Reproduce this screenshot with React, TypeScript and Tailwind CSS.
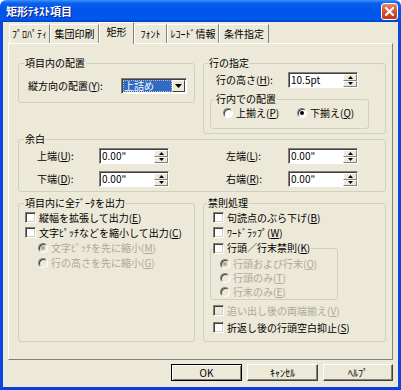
import React from 'react';

function M({ t, k, colon }: { t: string; k: string; colon?: boolean }) {
  return (
    <span className="whitespace-nowrap">
      {t}(<span className="underline underline-offset-[1px]">{k}</span>){colon ? ':' : ''}
    </span>
  );
}

function Check({ disabled }: { disabled?: boolean }) {
  return (
    <span
      className={`block w-[11px] h-[11px] shrink-0 border border-t-[#808080] border-l-[#808080] border-b-white border-r-white shadow-[inset_1px_1px_0_#404040,inset_-1px_-1px_0_#D4D0C8] ${
        disabled ? 'bg-[#ECE9D8]' : 'bg-white'
      }`}
    />
  );
}

function Radio({ checked, disabled }: { checked?: boolean; disabled?: boolean }) {
  return (
    <span
      className={`flex items-center justify-center w-[10px] h-[10px] shrink-0 rounded-full border border-t-[#808080] border-l-[#808080] border-b-white border-r-white shadow-[inset_1px_1px_0_#404040] ${
        disabled ? 'bg-[#ECE9D8]' : 'bg-white'
      }`}
    >
      {checked && (
        <span className={`w-[4px] h-[4px] rounded-full ${disabled ? 'bg-[#ACA899]' : 'bg-black'}`} />
      )}
    </span>
  );
}

function SpinBtn({ up }: { up?: boolean }) {
  return (
    <span className="flex items-center justify-center h-[7px] bg-[#ECE9D8] border border-t-white border-l-white border-b-[#808080] border-r-[#808080]">
      <svg width="5" height="3" viewBox="0 0 5 3">
        {up ? <path d="M2.5 0L5 3H0z" fill="#000" /> : <path d="M0 0h5L2.5 3z" fill="#000" />}
      </svg>
    </span>
  );
}

function SpinField({ value }: { value: string }) {
  return (
    <div className="flex w-[70px] h-[16px] border border-t-[#808080] border-l-[#808080] border-b-white border-r-white shadow-[inset_1px_1px_0_#404040] bg-white">
      <span className="flex-1 pl-[2px] pt-[1px] text-[10px] leading-[12px]">{value}</span>
      <span className="flex flex-col w-[14px] pt-[1px]">
        <SpinBtn up />
        <SpinBtn />
      </span>
    </div>
  );
}

function Legend({ children, ml = 'ml-[4px]' }: { children: React.ReactNode; ml?: string }) {
  return <legend className={`${ml} px-[1px] text-[10px] leading-[10px]`}>{children}</legend>;
}

const box = 'border border-[#D0D0BF] rounded-[3px] p-0 m-0 min-w-0';

function Tab({ label, w, active }: { label: string; w: string; active?: boolean }) {
  if (active) {
    return (
      <div
        className={`${w} h-[22px] mb-[-1px] relative z-10 flex justify-center pt-[3px] bg-[#ECE9D8] border-t border-l border-r border-t-white border-l-white border-r-[#808080]`}
      >
        {label}
      </div>
    );
  }
  return (
    <div
      className={`${w} h-[19px] flex justify-center pt-[3px] border-t border-l border-r border-t-white border-l-white border-r-[#808080]`}
    >
      {label}
    </div>
  );
}

export default function App() {
  return (
    <div className="w-[401px] h-[390px] flex flex-col font-['Noto_Sans_CJK_JP',sans-serif] text-[10px] leading-[12px] text-black">
      {/* title bar */}
      <div className="h-[22px] flex items-center justify-between rounded-t-[6px] bg-[linear-gradient(to_bottom,#3D95FF_0%,#0A5FEC_14%,#0055EA_50%,#0058EE_86%,#0040C4_100%)] pl-[6px] pr-[3px]">
        <span className="text-white font-bold text-[11px] leading-[14px] [text-shadow:1px_1px_0_#0A1883]">
          矩形ﾃｷｽﾄ項目
        </span>
        <span className="flex items-center justify-center w-[17px] h-[17px] rounded-[3px] border border-white bg-[linear-gradient(to_bottom,#E8896D,#D9532F_50%,#C13A18)]">
          <svg width="9" height="9" viewBox="0 0 9 9">
            <path d="M1 1L8 8M8 1L1 8" stroke="#fff" strokeWidth="2" strokeLinecap="square" />
          </svg>
        </span>
      </div>

      <div className="flex-1 flex flex-col bg-[#ECE9D8] border-x-[3px] border-b-[3px] border-x-[#0A46E0] border-b-[#0A3FD6]">
        {/* tabs */}
        <div className="h-[21px] flex items-end ml-[6px]">
          <Tab label="ﾌﾟﾛﾊﾟﾃｨ" w="w-[41px]" />
          <Tab label="集団印刷" w="w-[49px]" />
          <Tab label="矩形" w="w-[35px]" active />
          <Tab label="ﾌｫﾝﾄ" w="w-[33px]" />
          <Tab label="ﾚｺｰﾄﾞ情報" w="w-[52px]" />
          <Tab label="条件指定" w="w-[50px]" />
        </div>

        {/* panel */}
        <div className="ml-[5px] w-[385px] h-[317px] border border-t-white border-l-white border-r-[#808080] border-b-[#808080] pl-[9px] pt-[14px] flex flex-col">
          <div className="flex items-start gap-[8px]">
            <fieldset className={`${box} w-[177px] h-[45px]`}>
              <Legend ml="ml-[5px]">項目内の配置</Legend>
              <div className="flex items-center h-[16px] mt-[10px] pl-[9px]">
                <span className="w-[93px]">
                  <M t="縦方向の配置" k="Y" colon />
                </span>
                <div className="flex w-[66px] h-[16px] border border-t-[#808080] border-l-[#808080] border-b-white border-r-white shadow-[inset_1px_1px_0_#404040] bg-white p-[1px]">
                  <span className="flex-1 bg-[#316AC5] text-white pl-[1px] leading-[12px] outline-1 outline-dotted outline-[#C0C0C0] -outline-offset-1">
                    上詰め
                  </span>
                  <span className="flex items-center justify-center w-[13px] bg-[#ECE9D8] border border-t-white border-l-white border-b-[#404040] border-r-[#404040]">
                    <svg width="7" height="4" viewBox="0 0 7 4">
                      <path d="M0 0h7L3.5 4z" fill="#000" />
                    </svg>
                  </span>
                </div>
              </div>
            </fieldset>

            <fieldset className={`${box} w-[183px] h-[76px]`}>
              <Legend>行の指定</Legend>
              <div className="flex items-center h-[16px] mt-[4px] pl-[12px]">
                <span className="w-[72px]">
                  <M t="行の高さ" k="H" colon />
                </span>
                <SpinField value="10.5pt" />
              </div>
              <fieldset className={`${box} w-[159px] h-[35px] ml-[6px] mt-[6px]`}>
                <Legend ml="ml-[4px]">行内での配置</Legend>
                <div className="flex items-center h-[14px] mt-[2px] pl-[12px]">
                  <span className="flex items-center gap-[3px] w-[74px]">
                    <Radio />
                    <M t="上揃え" k="P" />
                  </span>
                  <span className="flex items-center gap-[3px]">
                    <Radio checked />
                    <M t="下揃え" k="Q" />
                  </span>
                </div>
              </fieldset>
            </fieldset>
          </div>

          <fieldset className={`${box} w-[368px] h-[58px]`}>
            <Legend ml="ml-[5px]">余白</Legend>
            <div className="flex flex-col gap-[7px] mt-[4px] pl-[18px]">
              <div className="flex items-center h-[16px]">
                <span className="w-[62px]">
                  <M t="上端" k="U" colon />
                </span>
                <SpinField value={'0.00"'} />
                <span className="w-[62px] ml-[57px]">
                  <M t="左端" k="L" colon />
                </span>
                <SpinField value={'0.00"'} />
              </div>
              <div className="flex items-center h-[16px]">
                <span className="w-[62px]">
                  <M t="下端" k="D" colon />
                </span>
                <SpinField value={'0.00"'} />
                <span className="w-[62px] ml-[57px]">
                  <M t="右端" k="R" colon />
                </span>
                <SpinField value={'0.00"'} />
              </div>
            </div>
          </fieldset>

          <div className="flex items-start gap-[8px] mt-[6px]">
            <fieldset className={`${box} w-[177px] h-[144px]`}>
              <Legend ml="ml-[5px]">項目内に全ﾃﾞｰﾀを出力</Legend>
              <div className="flex flex-col pt-[2px]">
                <div className="flex items-center gap-[3px] h-[15px] pl-[6px]">
                  <Check />
                  <M t="縦幅を拡張して出力" k="E" />
                </div>
                <div className="flex items-center gap-[3px] h-[15px] pl-[6px]">
                  <Check />
                  <M t="文字ﾋﾟｯﾁなどを縮小して出力" k="C" />
                </div>
                <div className="flex items-center gap-[3px] h-[15px] pl-[19px] text-[#ACA899]">
                  <Radio checked disabled />
                  <M t="文字ﾋﾟｯﾁを先に縮小" k="M" />
                </div>
                <div className="flex items-center gap-[3px] h-[15px] pl-[19px] text-[#ACA899]">
                  <Radio disabled />
                  <M t="行の高さを先に縮小" k="G" />
                </div>
              </div>
            </fieldset>

            <fieldset className={`${box} w-[183px] h-[144px]`}>
              <Legend ml="ml-[3px]">禁則処理</Legend>
              <div className="flex flex-col pt-[2px]">
                <div className="flex items-center gap-[3px] h-[15px] pl-[9px]">
                  <Check />
                  <M t="句読点のぶら下げ" k="B" />
                </div>
                <div className="flex items-center gap-[3px] h-[15px] pl-[9px]">
                  <Check />
                  <M t="ﾜｰﾄﾞﾗｯﾌﾟ" k="W" />
                </div>
                <fieldset className={`${box} w-[128px] h-[58px] ml-[6px] mt-[2px]`}>
                  <legend className="ml-[1px] px-[1px] flex items-center gap-[3px] h-[12px]">
                    <Check />
                    <M t="行頭／行末禁則" k="K" />
                  </legend>
                  <div className="flex flex-col pt-[3px] pl-[9px] text-[#ACA899]">
                    <div className="flex items-center gap-[3px] h-[14px]">
                      <Radio checked disabled />
                      <M t="行頭および行末" k="Q" />
                    </div>
                    <div className="flex items-center gap-[3px] h-[14px]">
                      <Radio disabled />
                      <M t="行頭のみ" k="T" />
                    </div>
                    <div className="flex items-center gap-[3px] h-[14px]">
                      <Radio disabled />
                      <M t="行末のみ" k="E" />
                    </div>
                  </div>
                </fieldset>
                <div className="flex items-center gap-[3px] h-[15px] pl-[9px] mt-[3px] text-[#ACA899]">
                  <Check disabled />
                  <M t="追い出し後の両端揃え" k="V" />
                </div>
                <div className="flex items-center gap-[3px] h-[15px] pl-[9px] mt-[2px]">
                  <Check />
                  <M t="折返し後の行頭空白抑止" k="S" />
                </div>
              </div>
            </fieldset>
          </div>
        </div>

        {/* buttons */}
        <div className="flex justify-end gap-[5px] mt-[4px] mr-[5px]">
          <button className="w-[71px] h-[17px] border border-black shadow-[inset_1px_1px_0_#fff,inset_-1px_-1px_0_#808080] bg-[#ECE9D8] leading-[12px]">
            OK
          </button>
          <button className="w-[71px] h-[17px] border border-t-white border-l-white border-b-[#404040] border-r-[#404040] shadow-[inset_-1px_-1px_0_#808080] bg-[#ECE9D8] leading-[12px]">
            ｷｬﾝｾﾙ
          </button>
          <button className="w-[70px] h-[17px] border border-t-white border-l-white border-b-[#404040] border-r-[#404040] shadow-[inset_-1px_-1px_0_#808080] bg-[#ECE9D8] leading-[12px]">
            ﾍﾙﾌﾟ
          </button>
        </div>
      </div>
    </div>
  );
}
